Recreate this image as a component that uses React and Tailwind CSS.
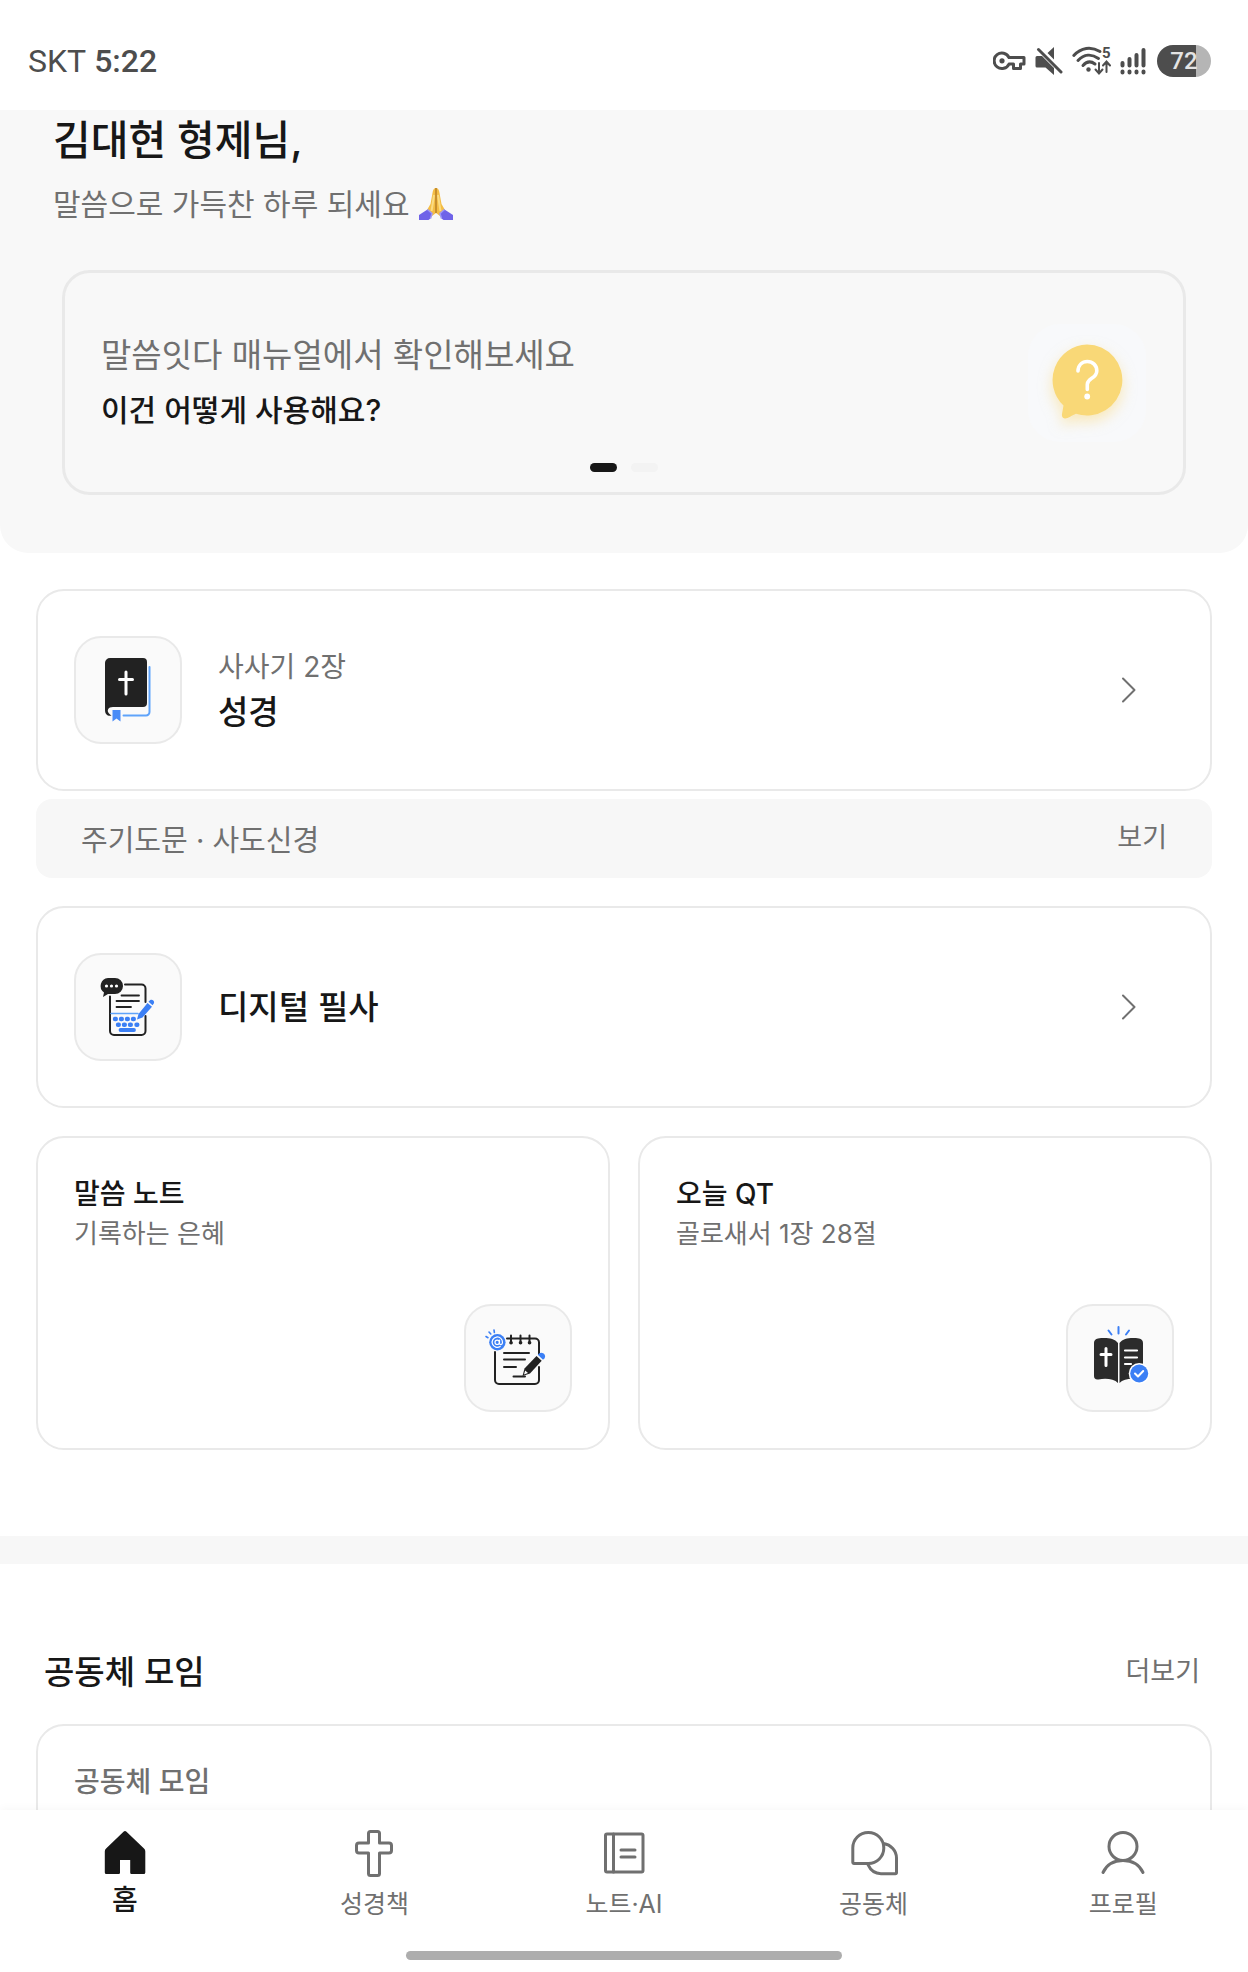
import React, { useState } from 'react';
import clsx from 'clsx';

const BLACK = '#222222';
const BLUE = '#3b7ff5';

const StatusIcons = () => (
  <div className="flex items-center gap-[9px] text-[#4d4d4d]">
    <svg width="33" height="20" viewBox="0 0 33 20" fill="none" stroke="currentColor" strokeWidth="3">
      <path d="M16 6.5A7.8 7.8 0 1 0 16 13h4.500v4.500h7V13H31V6.500z" strokeLinejoin="round" />
      <circle cx="9" cy="9.800" r="2.600" fill="currentColor" stroke="none" />
    </svg>
    <svg width="28" height="28" viewBox="0 0 28 28" fill="currentColor">
      <path d="M2 9h5l12 12v7l-8.500-7.500H2a1.500 1.500 0 0 1-1.500-1.500v-8.500A1.500 1.500 0 0 1 2 9zM19 0v12.500L12.500 6z" />
      <path d="M3.500 2.500l22.500 22.500" stroke="currentColor" strokeWidth="3" strokeLinecap="round" />
    </svg>
    <svg width="39" height="34" viewBox="0 -4 39 34" fill="none" stroke="currentColor" strokeWidth="3" strokeLinecap="round" className="-mt-1 overflow-visible">
      <path d="M1.800 9.500C9 1.500 19 0 28 5.500M6 14.500c6-6.500 13.500-7 20.500-2M11 19.500c3.500-4 8-4.500 12-1.500" />
      <circle cx="16.500" cy="23.500" r="2.200" fill="currentColor" stroke="none" />
      <path d="M27 17v10m-3.500-3.500L27 27.500l3.500-4M34.500 26V16m-3.500 3.500l3.500-4 3.500 4" strokeWidth="2" />
      <text x="30" y="12" fontSize="15" fontWeight="700" fontFamily="Roboto" fill="currentColor" stroke="none">5</text>
    </svg>
    <svg width="26" height="28" viewBox="0 0 26 28" stroke="currentColor" strokeWidth="4" strokeLinecap="round">
      <path d="M2.500 16v2.500M9.500 12v6.500M16.500 8v10.500M23.500 3v15.500M2.500 24.500v1M9.500 24.500v1M16.500 24.500v1M23.500 24.500v1" />
    </svg>
    <div className="ml-0.5 h-8 w-[54px] rounded-full bg-gradient-to-r from-[#4d4d4d] from-72% to-[#b5b5b5] to-72% flex items-center justify-center font-[Roboto] text-2xl font-medium text-[#e4e4e4]">
      72
    </div>
  </div>
);

const PrayingHands = () => (
  <svg role="img" aria-label="기도" width="36" height="34" viewBox="0 0 36 34">
    <path d="M18 1c-2-.5-3 2-3.500 5l-2 11L9 23l5 6 4-3 4 3 5-6-3.500-6-2-11c-.5-3-1.500-5.500-3.500-5z" fill="#f4bd45" />
    <path d="M16 8l-1.500 10-1 6M20 8l1.500 10 1 6" fill="none" stroke="#fbdc82" strokeWidth="2" />
    <path d="M18 1v25" stroke="#a8701f" strokeWidth="1.200" />
    <path d="M1 28l8.500-5.500 4.500 4-1.500 5-2 1.500H1z" fill="#6f63e8" />
    <path d="M35 28l-8.500-5.500-4.500 4 1.500 5 2 1.500H35z" fill="#6f63e8" />
    <path d="M9.500 22.500l4.500 4-1.500 5M26.500 22.500l-4.500 4 1.500 5" fill="none" stroke="#9c97f7" strokeWidth="1.500" />
  </svg>
);

const QuestionBubble = () => (
  <svg width="118" height="118" viewBox="0 0 118 118" fill="none" className="drop-shadow-[0_6px_7px_rgba(249,216,120,0.5)]">
    <path
      d="M59 20.500a35.500 35.500 0 1 1-11 69.300c-3 1.200-5.500 3-8.500 4.300-4 1.500-6-.8-5.500-4l1.500-8.500A35.500 35.500 0 0 1 59 20.500z"
      fill="#f9d877"
    />
    <path d="M50 47c.3-6 4.200-9.500 9.300-9.500 5.500 0 9.500 4 9.500 9.200 0 8.300-9.500 6.800-9.500 13.800v5" stroke="#fff" strokeWidth="3.600" strokeLinecap="round" />
    <circle cx="59.200" cy="72.500" r="2.900" fill="#fff" />
  </svg>
);

const BibleIcon = () => (
  <svg width="104" height="104" viewBox="0 0 104 104" fill="none" strokeLinecap="round" strokeLinejoin="round">
    <path d="M34 20h33a4 4 0 0 1 4 4v41a4 4 0 0 1-4 4H37c-5 0-6.500 3.500-4 6.500l2.500 2.200c-4 .8-6.500-1.700-6.500-5.700V25a5 5 0 0 1 5-5z" fill={BLACK} />
    <path d="M50 34v22M43.500 41.500h13" stroke="#fff" strokeWidth="3" />
    <path d="M73.500 29v45a3.500 3.500 0 0 1-3.500 3.500H47.500" stroke="#5fa3fa" strokeWidth="2" />
    <path d="M36.500 72h8v11.500l-4-3-4 3z" fill="#4a8cf7" />
  </svg>
);

const TypingIcon = () => (
  <svg width="104" height="104" viewBox="0 0 104 104" fill="none" strokeLinecap="round" strokeLinejoin="round">
    <path d="M49 29.500h16.500a4 4 0 0 1 4 4V47M69.500 61v15a4 4 0 0 1-4 4H38a4 4 0 0 1-4-4V41.500" stroke={BLACK} strokeWidth="2" />
    <path d="M45.500 40.500H63M40.500 46H63M40.500 52H55" stroke={BLACK} strokeWidth="1.800" />
    <path d="M32 23h7a8 8 0 0 1 0 16h-7l-5 3 1-4.500A8 8 0 0 1 32 23z" fill={BLACK} />
    <g fill="#fff">
      <circle cx="30.500" cy="31" r="1.600" />
      <circle cx="35.500" cy="31" r="1.600" />
      <circle cx="40.500" cy="31" r="1.600" />
    </g>
    <path d="M35 58.500h27" stroke="#5fa3fa" strokeWidth="1.500" />
    <path d="M39 64h.8M45 64h.8M51 64h.8M57 64h.8M42 69.800h.8M48 69.800h.8M54 69.800h.8M60.500 69.800h.8" stroke={BLUE} strokeWidth="4.400" />
    <path d="M44.500 75H58" stroke={BLUE} strokeWidth="3.800" />
    <path d="M61 64.500l1.500-5.500L71.500 48l4.500 3.800-9.500 10.700zM72.500 46.800l1.500-1.600c2.200-1.600 5 .8 3.800 3.200l-1.300 1.800z" fill={BLUE} />
  </svg>
);

const NoteIcon = () => (
  <svg width="104" height="104" viewBox="0 0 104 104" fill="none" strokeLinecap="round" strokeLinejoin="round">
    <path d="M41 32.500h28a4 4 0 0 1 4 4V48M73 61v13a4 4 0 0 1-4 4H33a4 4 0 0 1-4-4V46" stroke={BLACK} strokeWidth="2" />
    <path d="M45 29.500v7M54.500 29.500v7M63.500 29.500v7" stroke={BLACK} strokeWidth="2" />
    <path d="M45 36.800h.1M54.500 36.800h.1M63.500 36.800h.1" stroke={BLACK} strokeWidth="3.600" />
    <path d="M38 47h25M38 53.500h21M38 61h12M47.500 70.500H59" stroke={BLACK} strokeWidth="2" />
    <circle cx="31.400" cy="36.300" r="8.200" fill={BLUE} />
    <circle cx="31.200" cy="36.300" r="2.200" stroke="#fff" strokeWidth="1.200" />
    <path d="M33.500 34v3.300c0 2 3 1.600 3-.8a5.200 5.200 0 1 0-2.300 4" stroke="#fff" strokeWidth="1.200" />
    <path d="M20 30.500l2 1.200M23 26l1.800 2M28 24l.4 2.500" stroke={BLUE} strokeWidth="1.600" />
    <path d="M56.500 70l2-7.500L70.500 50l5.200 4.700L64 67.500z" fill={BLACK} />
    <path d="M58 68.500l1.200-4 2.800 2.600z" fill="#fff" />
    <path d="M71.800 48.800l1.500-1.500c3-2.200 7.500 1.500 5.200 5l-1.500 1.500z" fill={BLUE} />
  </svg>
);

const QtIcon = () => (
  <svg width="104" height="104" viewBox="0 0 104 104" fill="none" strokeLinecap="round" strokeLinejoin="round">
    <path d="M50.500 21v6.500M40.500 24.500l3 4M61 24.500l-3 4" stroke={BLUE} strokeWidth="2" />
    <path d="M30 32.500c8-1 16-.5 20 4.500V77c-4-4-12-5-19.500-3.500-3 .5-4.500-1-4.500-3.500V37c0-2.500 1.500-4.200 4-4.500z" fill="#2b2b2b" />
    <path d="M71 32.500c-8-1-15.500-.5-19.500 4.500V77c4-4 12-5 19-3.500 3 .5 4.500-1 4.500-3.500V37c0-2.500-1.500-4.200-4-4.500z" fill="#2b2b2b" />
    <path d="M38 42.500v17M33 48.500h10" stroke="#fff" strokeWidth="3" />
    <path d="M57 44.500h12M57 51.500h12M57 58h6" stroke="#fff" strokeWidth="2.200" />
    <circle cx="71.200" cy="67.500" r="10.500" fill="#fff" />
    <circle cx="71.200" cy="67.500" r="9" fill={BLUE} />
    <path d="M67 67.500l3 3 5.200-5.500" stroke="#fff" strokeWidth="2" />
  </svg>
);

const Chevron = () => (
  <svg width="16" height="28" viewBox="0 0 16 28" fill="none" stroke="#707070" strokeWidth="2" strokeLinecap="round" strokeLinejoin="round">
    <path d="M2 2.500L13.500 14 2 25.500" />
  </svg>
);

const Tile = ({ children, className }) => (
  <span className={clsx('w-[108px] h-[108px] shrink-0 rounded-[27px] border-2 border-[#e9e9e9] bg-[#fafafa]', className)}>
    {children}
  </span>
);

const MenuCard = ({ icon, caption, title }) => (
  <button className="w-full flex items-center rounded-[28px] border-2 border-[#e9e9e9] bg-white py-[45px] pl-9 pr-[73px] text-left">
    <Tile>{icon}</Tile>
    <span className="ml-9 flex-1">
      {caption && <span className="block text-[28px] leading-[44px] text-[#707070]">{caption}</span>}
      <span className="block text-[33px] leading-[46px] font-medium">{title}</span>
    </span>
    <Chevron />
  </button>
);

const SmallCard = ({ icon, title, caption }) => (
  <button className="flex flex-col rounded-[28px] border-2 border-[#e9e9e9] bg-white p-9 text-left">
    <span className="block text-[28px] leading-10 font-medium">{title}</span>
    <span className="block text-[26px] leading-10 text-[#707070]">{caption}</span>
    <Tile className="mt-[50px] self-end">{icon}</Tile>
  </button>
);

const tabs = [
  {
    id: 'home',
    label: '홈',
    icon: (
      <path
        d="M22.500 2.800a2.200 2.200 0 0 1 3 0L43 19.500a4 4 0 0 1 1.300 3V43.500a1.500 1.500 0 0 1-1.500 1.500H30.500a1.300 1.300 0 0 1-1.300-1.300V31H19v12.700a1.300 1.300 0 0 1-1.300 1.300H5.300a1.500 1.500 0 0 1-1.500-1.500v-21a4 4 0 0 1 1.300-3z"
        fill="currentColor"
        stroke="none"
      />
    )
  },
  {
    id: 'bible',
    label: '성경책',
    icon: <path d="M20.500 2.500h7a2 2 0 0 1 2 2v9.500h9.500a2.500 2.500 0 0 1 2.500 2.500v5a2.500 2.500 0 0 1-2.500 2.500h-9.500V44.500a2 2 0 0 1-2 2h-7a2 2 0 0 1-2-2V24H9a2.500 2.500 0 0 1-2.500-2.500v-5A2.500 2.500 0 0 1 9 14h9.500V4.500a2 2 0 0 1 2-2z" />
  },
  {
    id: 'note',
    label: '노트·AI',
    icon: (
      <>
        <rect x="5.500" y="5" width="37.500" height="38" rx="1.500" />
        <path d="M13.500 5v38M21 21h14M21 28h14" />
      </>
    )
  },
  {
    id: 'community',
    label: '공동체',
    icon: (
      <>
        <path d="M18.300 3.500c8.700 0 15.500 7 15.500 15.500s-6.800 15.500-15.500 15.500H4a1.200 1.200 0 0 1-1.200-1.200V19c0-8.500 6.800-15.500 15.500-15.500z" />
        <path d="M33.500 14.500c7.500 1.200 13 7 13 14.500v14.500a1.200 1.200 0 0 1-1.200 1.200H31c-6 0-10.500-3.500-13-9" />
      </>
    )
  },
  {
    id: 'profile',
    label: '프로필',
    icon: (
      <>
        <circle cx="24" cy="17.500" r="14" />
        <path d="M4 43.500c3.500-7.500 10.500-12 20-12s16.500 4.500 20 12" />
      </>
    )
  }
];

const TabBar = () => {
  const [active, setActive] = useState('home');

  return (
    <nav className="relative shrink-0 bg-white pt-[19px] pb-3 shadow-[0_-2px_8px_rgba(0,0,0,0.03)]">
      <div className="grid grid-cols-5">
        {tabs.map(tab => (
          <button
            key={tab.id}
            onClick={() => setActive(tab.id)}
            className={clsx('flex h-24 flex-col items-center', active === tab.id ? 'text-[#171717]' : 'text-[#707070]')}
          >
            <svg width="48" height="48" viewBox="0 0 48 48" fill="none" stroke="currentColor" strokeWidth="3" strokeLinecap="round" strokeLinejoin="round">
              {tab.icon}
            </svg>
            <span className={clsx('leading-[38px]', active === tab.id ? 'mt-1 text-[28px] font-medium' : 'mt-2 text-[25px]')}>{tab.label}</span>
          </button>
        ))}
      </div>
      <div className="mx-auto mt-[26px] h-[9px] w-[35%] rounded-full bg-[#adadad]" />
    </nav>
  );
};

const App = () => {
  return (
    <div className="h-screen flex flex-col bg-white text-[#171717] font-[Inter,'Noto_Sans_CJK_KR',sans-serif]">
      <header className="flex h-[110px] shrink-0 items-center justify-between pl-7 pr-[37px] pt-3">
        <div className="flex items-center gap-2 font-[Roboto] text-[32px] leading-10 text-[#4d4d4d]">
          <span>SKT</span>
          <span className="font-medium">5:22</span>
        </div>
        <StatusIcons />
      </header>

      <main className="flex-1 overflow-y-auto [scrollbar-width:none]">
        <section className="rounded-b-[28px] bg-[#f8f8f8] pb-[58px]">
          <div className="px-[53px]">
            <h1 className="text-[41px] leading-[60px] font-medium">김대현 형제님,</h1>
            <p className="mt-2.5 flex items-center gap-2 text-[30px] leading-[48px] text-[#707070]">
              말씀으로 가득찬 하루 되세요
              <PrayingHands />
            </p>
          </div>

          <div className="relative mx-[62px] mt-[42px] flex items-center justify-between rounded-[28px] border-[3px] border-[#e9e9e9] pt-[51px] pb-[50px] pl-9 pr-[37px]">
            <div>
              <p className="text-[33px] leading-[54px] text-[#707070]">말씀잇다 매뉴얼에서 확인해보세요</p>
              <p className="text-[30px] leading-[56px] font-medium">이건 어떻게 사용해요?</p>
            </div>
            <div className="rounded-[32px] bg-[#f8f9fb]">
              <QuestionBubble />
            </div>
            <div className="absolute inset-x-0 bottom-5 flex justify-center gap-3.5">
              <span className="h-[9px] w-[27px] rounded-full bg-[#171717]" />
              <span className="h-[9px] w-[27px] rounded-full bg-[#f3f3f3]" />
            </div>
          </div>
        </section>

        <section className="px-9 pt-9 pb-[86px]">
          <MenuCard icon={<BibleIcon />} caption="사사기 2장" title="성경" />
          <div className="mt-2 mb-7 flex h-[79px] items-center justify-between rounded-[16px] bg-[#f7f7f7] px-[45px] text-[#707070]">
            <span className="pt-1 text-[29px]">주기도문 · 사도신경</span>
            <button className="text-[27px]">보기</button>
          </div>
          <MenuCard icon={<TypingIcon />} title="디지털 필사" />
          <div className="mt-7 grid grid-cols-2 gap-7">
            <SmallCard icon={<NoteIcon />} title="말씀 노트" caption="기록하는 은혜" />
            <SmallCard icon={<QtIcon />} title="오늘 QT" caption="골로새서 1장 28절" />
          </div>
        </section>

        <div className="h-7 bg-[#f7f7f7]" />

        <section className="px-9 pt-[84px] pb-9">
          <div className="flex items-center justify-between pl-2 pr-3">
            <h2 className="text-[33px] leading-[48px] font-medium">공동체 모임</h2>
            <button className="text-[27px] text-[#707070]">더보기</button>
          </div>
          <div className="mt-[28px] rounded-[28px] border-2 border-[#e9e9e9] px-9 py-[34px]">
            <h3 className="text-[28px] leading-[44px] font-medium text-[#707070]">공동체 모임</h3>
          </div>
        </section>
      </main>

      <TabBar />
    </div>
  );
};

export default App;
